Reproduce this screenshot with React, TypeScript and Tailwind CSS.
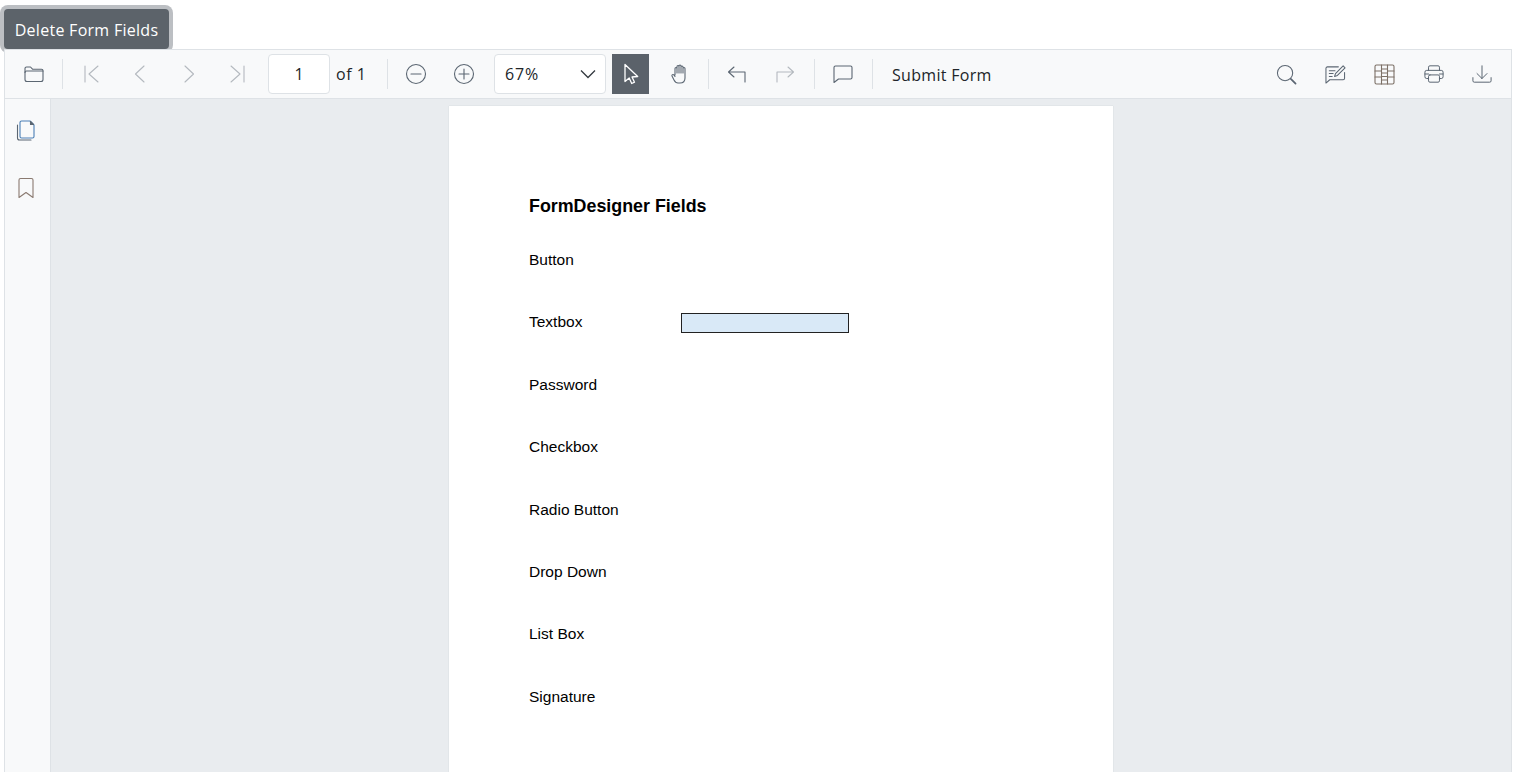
const C = "#5b6672";
const Ic = ({ children, w = 20, h = 20, vb = "0 0 20 20", stroke = C }: any) => (
  <svg width={w} height={h} viewBox={vb} fill="none" stroke={stroke} strokeWidth="1.1" strokeLinecap="round" strokeLinejoin="round">{children}</svg>
);
const Btn = ({ children, w = "w-[48px]" }: any) => (
  <div className={`${w} h-10 flex items-center justify-center shrink-0`}>{children}</div>
);
const Sep = () => <div className="w-px h-[30px] bg-[#dee2e6] shrink-0" />;
const D = "#b4b9bf";
const rows = ["Button", "Textbox", "Password", "Checkbox", "Radio Button", "Drop Down", "List Box", "Signature"];

export default function App() {
  return (
    <div className="h-[772px] w-[1525px] overflow-hidden bg-white pl-[4px] pr-[13px] flex flex-col" style={{ fontFamily: '"Open Sans", sans-serif' }}>
      <div className="pt-[9px] h-[49px] shrink-0 relative z-10">
        <button className="w-[165px] h-[40px] pt-[2px] rounded-[4px] bg-[#5c636a] text-white text-[16px] tracking-[0.28px] ring-4 ring-[#bcbfc3] flex items-center justify-center whitespace-nowrap">Delete Form Fields</button>
      </div>
      <div className="h-[50px] shrink-0 bg-[#f8f9fa] border border-[#dee2e6] flex items-center relative z-20 text-[#212529]">
        <div className="ml-[5px] flex items-center">
          <Btn><Ic><path d="M1 15.500V4.500a1.500 1.500 0 0 1 1.500-1.500h4l2 2.200h9a1.500 1.500 0 0 1 1.500 1.500v8.800a2 2 0 0 1-2 2H3a2 2 0 0 1-2-2Z" /><path d="M1 8.500A1.500 1.500 0 0 1 2.500 7H19" /></Ic></Btn>
          <div className="ml-[4px]"><Sep /></div>
          <div className="ml-[5px] flex">
            <Btn w="w-[48.250px]"><Ic stroke={D}><path d="M3 2v16M16 2 7 10l9 8" /></Ic></Btn>
            <Btn w="w-[48.250px]"><Ic stroke={D}><path d="M14 2 5.500 10l8.500 8" /></Ic></Btn>
            <Btn w="w-[48.250px]"><Ic stroke={D}><path d="m6 2 8.500 8L6 18" /></Ic></Btn>
            <Btn w="w-[48.250px]"><Ic stroke={D}><path d="M17 2v16M4 2l9 8-9 8" /></Ic></Btn>
          </div>
          <div className="ml-[7px] w-[62px] h-10 rounded-[4px] bg-white border border-[#dee2e6] flex items-center justify-center text-[16px]">1</div>
          <span className="ml-[6px] text-[16px] tracking-[0.5px] w-[51px]">of 1</span>
          <Sep />
          <div className="ml-[4px] flex">
            <Btn><Ic w={22} h={22} vb="0 0 22 22"><circle cx="11" cy="11" r="9.500" /><path d="M6 11h10" /></Ic></Btn>
            <Btn><Ic w={22} h={22} vb="0 0 22 22"><circle cx="11" cy="11" r="9.500" /><path d="M6 11h10M11 6v10" /></Ic></Btn>
          </div>
          <div className="ml-[6px] w-[112px] h-10 rounded-[4px] bg-white border border-[#dee2e6] flex items-center justify-between pl-[10px] pr-[9px] text-[16px]">
            <span className="tracking-[0.9px]">67%</span>
            <svg width="16" height="10" viewBox="0 0 16 10" fill="none" stroke="#343a40" strokeWidth="1.300"><path d="m1 1.500 7 7 7-7" /></svg>
          </div>
          <div className="ml-[6px] w-[37px] h-10 bg-[#5b626a] flex items-center justify-center">
            <svg width="20" height="24" viewBox="0 0 20 24" fill="none" stroke="#fff" strokeWidth="1.300" strokeLinejoin="round"><path d="M4 2.500v17l4.200-3.500 2.500 5.500 2.800-1.300-2.500-5.200 5.700-.5Z" /></svg>
          </div>
          <div className="ml-[7px]"><Btn><Ic w={20} h={22} vb="0 0 20 22"><path d="M5 12V5.500a1 1 0 0 1 2 0V10M7 10V3.500a1 1 0 0 1 2 0V10M9 10V3a1 1 0 0 1 2 0v7M11 10V4a1 1 0 0 1 2 0v6M13 10V5.500a1 1 0 0 1 2 0V15c0 3-2 5-5 5H8c-2 0-3-1-4-3l-2-4c-.5-1.200 1-2 2-1l1 1.500" /></Ic></Btn></div>
          <div className="ml-[4px]"><Sep /></div>
          <div className="ml-[4px] flex">
            <Btn><Ic><path d="M7 3 1.500 8 7 13M1.500 8H18v10" /></Ic></Btn>
            <Btn><Ic stroke={D}><path d="m13 3 5.500 5L13 13M18.500 8H2v10" /></Ic></Btn>
          </div>
          <div className="ml-[5px]"><Sep /></div>
          <div className="ml-[4px]"><Btn><Ic><path d="M2.500 2h15a1.500 1.500 0 0 1 1.500 1.500v10a1.500 1.500 0 0 1-1.500 1.500H5.500L1 18.500V3.500A1.500 1.500 0 0 1 2.500 2Z" /></Ic></Btn></div>
          <div className="ml-[5px]"><Sep /></div>
          <span className="ml-[19px] mt-[1px] text-[16px] tracking-[0.3px] whitespace-nowrap">Submit Form</span>
        </div>
        <div className="ml-auto mr-[5px] flex">
          <Btn w="w-[49px]"><Ic w={21} h={21} vb="0 0 22 22"><circle cx="9.500" cy="9.500" r="8" /><path d="m15.500 15.500 5 5" strokeWidth="1.800" /></Ic></Btn>
          <Btn w="w-[49px]"><Ic w={21} h={21} vb="0 0 22 22"><path d="M14 3H2.500A1.500 1.500 0 0 0 1 4.500V20l4-3.500h14a1.500 1.500 0 0 0 1.500-1.500V9M4.500 7h6M4.500 10h4M4.500 13h3M10 13l1-3 8-8 2 2-8 8Z" /></Ic></Btn>
          <Btn w="w-[49px]"><Ic w={21} h={21} vb="0 0 21 21" stroke="#7c7066"><rect x="1" y="1" width="19" height="19" rx="1.500" /><path d="M7.500 1v19M13.500 1v19M1 7h6.500M13.500 7H20M1 13h6.500M13.500 13H20M7.500 5h6M7.500 9h6M7.500 12.500h6M7.500 16h6" /></Ic></Btn>
          <Btn w="w-[49px]"><Ic w={20} h={20} vb="0 0 22 22"><path d="M5 7V3.500A1.500 1.500 0 0 1 6.500 2h9A1.500 1.500 0 0 1 17 3.500V7M5 16H3a2 2 0 0 1-2-2V9a2 2 0 0 1 2-2h16a2 2 0 0 1 2 2v5a2 2 0 0 1-2 2h-2" /><rect x="5" y="12" width="12" height="8" rx="1.500" /><path d="M1 11h4M17 11h4" /></Ic></Btn>
          <Btn w="w-[48px]"><Ic w={20} h={20} vb="0 0 22 22"><path d="M11 2v14M5.500 10.500 11 16l5.500-5.500M1 15v3.500A1.500 1.500 0 0 0 2.500 20h17a1.500 1.500 0 0 0 1.500-1.500V15" /></Ic></Btn>
        </div>
      </div>
      <div className="flex-1 flex min-h-0 border-l border-r border-[#dee2e6]">
        <div className="w-[46px] shrink-0 bg-[#f8f9fa] border-r border-[#dee2e6] flex flex-col items-center pt-[20px] gap-[36px] pr-[4px]">
          <Ic w={22} h={22} vb="0 0 22 22"><path d="M5 3.500A1.500 1.500 0 0 1 6.500 2H15l4 4v11.500a1.500 1.500 0 0 1-1.500 1.500h-11A1.500 1.500 0 0 1 5 17.500Z" stroke="#4a7fb5" /><path d="M2.500 6v13a2 2 0 0 0 2 2H16" /><path d="M15.500 2.500v3h3Z" fill={C} /></Ic>
          <Ic w={18} h={22} vb="0 0 18 22" stroke="#8a7a70"><path d="M2 20.500V3a1.500 1.500 0 0 1 1.500-1.500h11A1.500 1.500 0 0 1 16 3v17.500l-7-5Z" /></Ic>
        </div>
        <div className="flex-1 min-w-0 bg-[#e9ecef] pt-[7px]">
          <div className="mx-auto w-[664px] h-[700px] bg-white shadow-[0_0_1px_#c4c8cc] pl-[80px] pt-[88px] text-black" style={{ fontFamily: '"Liberation Sans", Arial, sans-serif' }}>
            <div className="text-[17.850px] leading-[24px] font-bold h-[54px]">FormDesigner Fields</div>
            <div className="flex flex-col gap-[38.900px]">
              {rows.map((r) => (
                <div key={r} className="h-[23.500px] flex items-center text-[15.500px] leading-none relative">
                  {r}
                  {r === "Textbox" && <div className="absolute left-[152px] top-[3px] w-[168px] h-[20px] bg-[#d9e9f7] border border-[#222]" />}
                </div>
              ))}
            </div>
          </div>
        </div>
      </div>
    </div>
  );
}
